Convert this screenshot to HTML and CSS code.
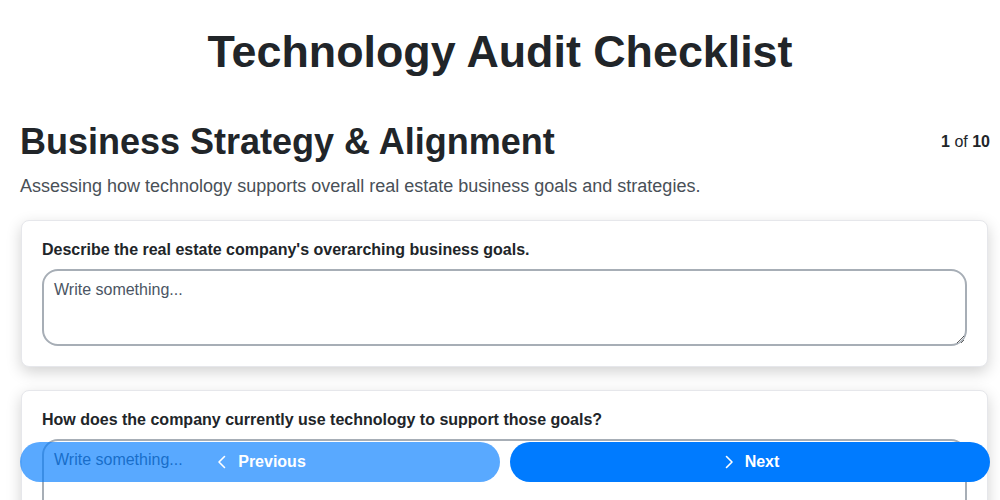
FILE: index.html
```html
<!DOCTYPE html>
<html lang="en">
<head>
<meta charset="utf-8">
<title>Technology Audit Checklist</title>
<link rel="stylesheet" href="styles.css">
</head>
<body>
<h1 class="title">Technology Audit Checklist</h1>
<main class="page">
  <div class="section-head">
    <h2 class="section-title">Business Strategy &amp; Alignment</h2>
    <div class="counter"><b>1</b> of <b>10</b></div>
  </div>
  <p class="section-desc">Assessing how technology supports overall real estate business goals and strategies.</p>
  <div class="cards">
    <div class="card">
      <label class="q-label">Describe the real estate company's overarching business goals.</label>
      <textarea class="q-input" placeholder="Write something..."></textarea>
    </div>
    <div class="card">
      <label class="q-label">How does the company currently use technology to support those goals?</label>
      <textarea class="q-input" placeholder="Write something..."></textarea>
    </div>
    <div class="card">
      <label class="q-label">Are there any gaps between business goals and technology capabilities?</label>
      <textarea class="q-input" placeholder="Write something..."></textarea>
    </div>
  </div>
</main>
<nav class="nav-bar">
  <button class="nav-btn prev" disabled>
    <svg class="chev" viewBox="0 0 16 16" width="16" height="16"><path d="M10.5 2.5 5 8l5.5 5.5" fill="none" stroke="currentColor" stroke-width="1.6" stroke-linecap="round" stroke-linejoin="round"/></svg>
    <span>Previous</span>
  </button>
  <button class="nav-btn next">
    <svg class="chev" viewBox="0 0 16 16" width="16" height="16"><path d="M5.5 2.5 11 8l-5.5 5.5" fill="none" stroke="currentColor" stroke-width="1.6" stroke-linecap="round" stroke-linejoin="round"/></svg>
    <span>Next</span>
  </button>
</nav>
</body>
</html>
```
FILE: styles.css
```css
* { box-sizing: border-box; }
html, body { margin: 0; padding: 0; background: #fff; }
body {
  font-family: "Liberation Sans", Arial, sans-serif;
  color: #212529;
}
.title {
  margin: 24px 0 0;
  font-size: 44.8px;
  line-height: 54px;
  font-weight: 700;
  text-align: center;
  color: #212529;
}
.page {
  padding: 0 10px 120px 20px;
}
.section-head {
  margin-top: 42px;
  display: flex;
  align-items: center;
  justify-content: space-between;
}
.section-title {
  margin: 0;
  font-size: 36px;
  line-height: 43px;
  font-weight: 700;
  color: #212529;
}
.counter {
  font-size: 16px;
  color: #212529;
}
.counter b { font-weight: 700; }
.section-desc {
  margin: 10px 0 20px;
  font-size: 18px;
  line-height: 27px;
  color: #495057;
}
.cards {
  display: flex;
  flex-direction: column;
  gap: 23px;
  margin: 0 2px 0 1px;
}
.card {
  display: flex;
  flex-direction: column;
  padding: 20px;
  background: #fff;
  border: 1px solid #e6e7eb;
  border-radius: 8px;
  box-shadow: 0 5px 15px rgba(0, 0, 0, 0.18);
}
.q-label {
  font-size: 16px;
  line-height: 18px;
  font-weight: 700;
  color: #212529;
  margin-bottom: 10px;
}
.q-input {
  display: block;
  width: 100%;
  height: 77px;
  padding: 10px;
  border: 2px solid #a7aeb6;
  border-radius: 16px;
  font-family: "Liberation Sans", Arial, sans-serif;
  font-size: 16px;
  line-height: 18px;
  color: #212529;
  background: #fff;
  resize: vertical;
  outline: none;
}
.q-input::placeholder { color: #4b5563; opacity: 1; }
.nav-bar {
  position: fixed;
  left: 20px;
  right: 10px;
  bottom: 18px;
  display: flex;
  gap: 10px;
}
.nav-btn {
  flex: 1;
  height: 40px;
  border: none;
  border-radius: 20px;
  background: #007bff;
  color: #fff;
  font-family: "Liberation Sans", Arial, sans-serif;
  font-size: 16px;
  font-weight: 700;
  display: flex;
  align-items: center;
  justify-content: center;
  gap: 8px;
  cursor: pointer;
}
.nav-btn.prev { opacity: 0.65; cursor: default; }
.chev { display: block; }
```
